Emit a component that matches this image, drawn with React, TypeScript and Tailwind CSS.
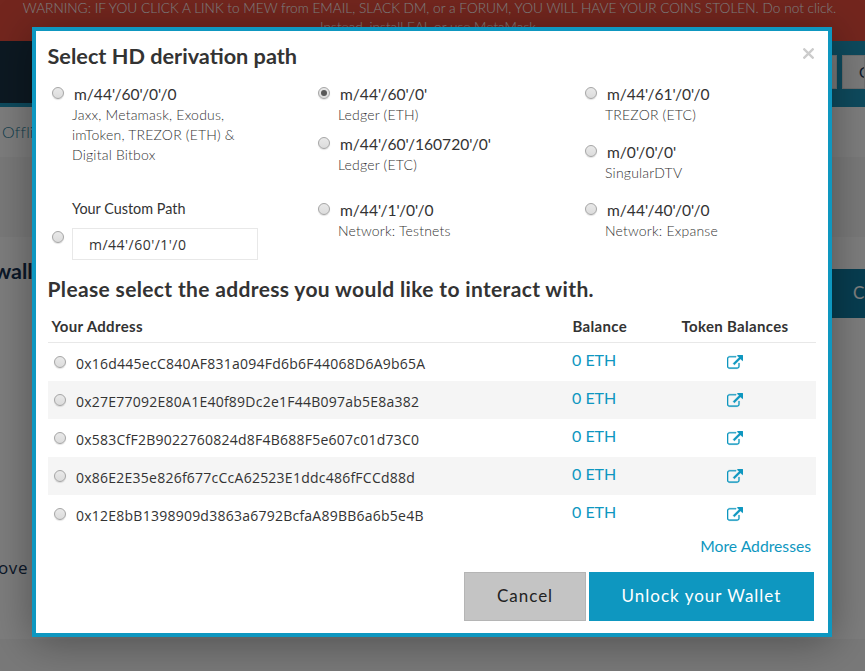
import React from "react";

function Radio({ checked = false }: { checked?: boolean }) {
  return (
    <span
      className="flex h-[12px] w-[12px] shrink-0 items-center justify-center rounded-full border border-[#a5a5a5] bg-linear-to-b from-[#e9e9e9] to-[#dcdcdc] shadow-[0_1px_1px_rgba(0,0,0,0.12)]"
      role="radio"
      aria-checked={checked}
    >
      {checked && <span className="h-[6px] w-[6px] rounded-full bg-[#585858]" />}
    </span>
  );
}

function PathOption({
  path,
  lines,
  checked,
}: {
  path: string;
  lines: string[];
  checked?: boolean;
}) {
  return (
    <div className="pl-1">
      <div className="flex h-5 items-start pt-[2px]">
        <Radio checked={checked} />
        <span className="-mt-[3px] ml-[10px] text-[15.600px] leading-5 whitespace-nowrap">{path}</span>
      </div>
      {lines.map((line) => (
        <p key={line} className="ml-[20px] text-[14px] leading-5 font-light tracking-[0.2px] whitespace-nowrap">
          {line}
        </p>
      ))}
    </div>
  );
}

function ExternalLink() {
  return (
    <svg className="h-[16px] w-[16px]" viewBox="0 0 1792 1792" fill="currentColor" stroke="currentColor" strokeWidth="30">
      <path d="M1408 928v320q0 119-84.500 203.500t-203.500 84.500h-832q-119 0-203.500-84.500t-84.500-203.500v-832q0-119 84.500-203.500t203.500-84.500h704q14 0 23 9t9 23v64q0 14-9 23t-23 9h-704q-66 0-113 47t-47 113v832q0 66 47 113t113 47h832q66 0 113-47t47-113v-320q0-14 9-23t23-9h64q14 0 23 9t9 23zm384-864v512q0 26-19 45t-45 19-45-19l-176-176-652 652q-10 10-23 10t-23-10l-114-114q-10-10-10-23t10-23l652-652-176-176q-19-19-19-45t19-45 45-19h512q26 0 45 19t19 45z" />
    </svg>
  );
}

const addresses = [
  "0x16d445ecC840AF831a094Fd6b6F44068D6A9b65A",
  "0x27E77092E80A1E40f89Dc2e1F44B097ab5E8a382",
  "0x583CfF2B9022760824d8F4B688F5e607c01d73C0",
  "0x86E2E35e826f677cCcA62523E1ddc486fFCCd88d",
  "0x12E8bB1398909d3863a6792BcfaA89BB6a6b5e4B",
];

function Page() {
  return (
    <div className="flex h-[671px] flex-col bg-[#fafafa] text-[#163151]">
      <div className="h-[41px] shrink-0 overflow-hidden bg-[#e74c3c] pr-[6px] text-center text-[13.680px] leading-5 font-light whitespace-nowrap text-white">
        <p className="-mt-[2px]">
          WARNING: IF YOU CLICK A LINK to MEW from EMAIL, SLACK DM, or a FORUM, YOU WILL HAVE YOUR COINS STOLEN. Do not click.
        </p>
        <p className="-mt-px">Instead, install EAL or use MetaMask.</p>
      </div>
      <div className="flex h-[66px] shrink-0">
        <div className="w-[400px] border-b-4 border-[#1d95bb] bg-[#1a3244]" />
        <div className="flex flex-1 justify-end gap-[5px] bg-[#1d95bb] pt-[14px]">
          <div className="h-[34px] w-[60px] border border-[#ddd] bg-[#f4f4f4]" />
          <div className="h-[34px] w-[23px] overflow-hidden border border-[#ddd] bg-[#f4f4f4] pl-[16px] text-[15px] leading-8">G</div>
        </div>
      </div>
      <div className="h-[50px] shrink-0 pt-[13px] pl-[2px] text-[16px] leading-6 font-light tracking-[0.2px] text-[#1d7a9b]">Offline</div>
      <div className="h-[80px] shrink-0 bg-[#f2f2f2]" />
      <div className="h-[402px] shrink-0 overflow-hidden bg-[#fafafa]">
        <div className="flex h-[81px] justify-between pt-[22px]">
          <span className="-ml-[6px] text-[21.500px] leading-6 font-bold">wall</span>
          <div className="mt-[10px] h-[49px] w-[165px] overflow-hidden bg-[#0f7ba0] pl-[153px] text-[17px] leading-[48px] text-white">C</div>
        </div>
        <p className="-ml-[2px] pt-[238px] font-['Open_Sans','Noto_Sans',sans-serif] text-[17px] leading-6 tracking-[0.6px]">ove</p>
      </div>
      <div className="flex-1 bg-[#f2f2f2]" />
    </div>
  );
}

export default function App() {
  return (
    <div className="relative h-[671px] w-[865px] overflow-hidden font-['Lato',sans-serif] text-[#333]">
      <Page />
      <div className="absolute inset-0 bg-black/50 pt-[27px] pl-[32px]">
        <div className="flex h-[610px] w-[800px] flex-col border-4 border-[#0e97c0] bg-white px-3 shadow-[0_5px_40px_rgba(0,0,0,0.35)]">
          <div className="flex h-[54px] shrink-0 justify-between pt-[11px]">
            <h2 className="-ml-[0.5px] text-[21.700px] leading-7 font-bold">Select HD derivation path</h2>
            <svg className="mt-[6px] mr-[2px] h-[11px] w-[11px]" viewBox="0 0 11 11" stroke="#ccc" strokeWidth="2.3">
              <path d="M0.500 0.500L10.500 10.500M10.500 0.500L0.500 10.500" />
            </svg>
          </div>

          <div className="grid h-[190px] shrink-0 grid-cols-[266px_267px_1fr]">
            <div>
              <PathOption path="m/44'/60'/0'/0" lines={["Jaxx, Metamask, Exodus,", "imToken, TREZOR (ETH) &", "Digital Bitbox"]} />
              <p className="mt-[34px] pl-[24px] text-[14.400px] leading-5 whitespace-nowrap">Your Custom Path</p>
              <div className="mt-[9px] flex items-start pl-1">
                <div className="mt-[3px]"><Radio /></div>
                <div className="ml-2 h-[32px] w-[186px] border border-[#e8e8e8] pl-4 font-['Open_Sans','Noto_Sans',sans-serif] text-[14px] leading-[31px] tracking-[0.48px]">m/44'/60'/1'/0</div>
              </div>
            </div>
            <div>
              <PathOption path="m/44'/60'/0'" lines={["Ledger (ETH)"]} checked />
              <div className="mt-[10px]"><PathOption path="m/44'/60'/160720'/0'" lines={["Ledger (ETC)"]} /></div>
              <div className="mt-[26px]"><PathOption path="m/44'/1'/0'/0" lines={["Network: Testnets"]} /></div>
            </div>
            <div className="flex flex-col gap-[18px]">
              <PathOption path="m/44'/61'/0'/0" lines={["TREZOR (ETC)"]} />
              <PathOption path="m/0'/0'/0'" lines={["SingularDTV"]} />
              <PathOption path="m/44'/40'/0'/0" lines={["Network: Expanse"]} />
            </div>
          </div>

          <h2 className="-ml-[0.5px] h-[35px] shrink-0 text-[21px] leading-7 font-bold tracking-[0.35px]">
            Please select the address you would like to interact with.
          </h2>

          <div className="grid h-[33px] shrink-0 grid-cols-[521px_109px_1fr] border-b border-[#e8e8e8] pl-[3.5px] text-[15px] leading-[33px] font-bold tracking-[0.33px]">
            <span>Your Address</span>
            <span>Balance</span>
            <span>Token Balances</span>
          </div>
          {addresses.map((address) => (
            <div key={address} className="grid h-[38px] shrink-0 grid-cols-[518px_155px_1fr] pl-[6px] even:bg-[#f5f5f5]">
              <div className="flex pt-[13px]">
                <Radio />
                <span className="-mt-[2px] ml-[10px] font-['Open_Sans','Noto_Sans',sans-serif] text-[14px] leading-5 tracking-[0.24px]">{address}</span>
              </div>
              <span className="pt-[7px] text-[16px] leading-5 text-[#0e97c0]">0 ETH</span>
              <span className="pt-[12px] text-[#0e97c0]"><ExternalLink /></span>
            </div>
          ))}
          <a className="mt-[3px] h-[36px] shrink-0 pr-[5px] text-right text-[15.700px] leading-5 text-[#0e97c0]">More Addresses</a>
          <div className="flex justify-end gap-[3px] pr-[2px]">
            <button className="h-[49px] w-[122px] border border-[#b5b5b5] bg-[#c4c4c4] pb-[2px] text-[17px] tracking-[1px] text-[#222]">Cancel</button>
            <button className="h-[49px] w-[225px] bg-[#0e97c0] pb-[2px] text-[17px] tracking-[1px] text-white">Unlock your Wallet</button>
          </div>
        </div>
      </div>
    </div>
  );
}
